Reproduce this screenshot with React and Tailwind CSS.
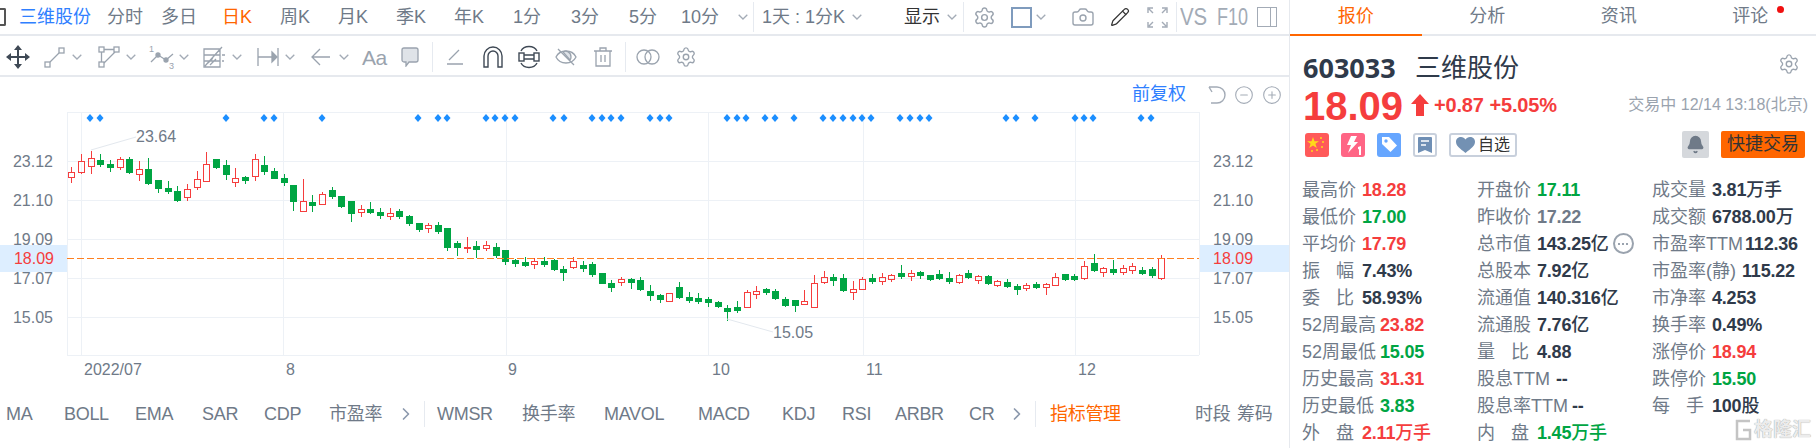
import { Settings, Camera, Pencil, Bell, CircleMinus, CirclePlus, ChevronRight } from 'lucide-react';

// [wickTop, bodyTop, bodyBottom, wickBottom, up] measured in 3x px from y=130
const CANDLES = [
  [111,127,142,158,1],[72,94,127,133,1],[63,85,109,131,1],[72,90,104,110,0],[90,102,113,125,0],[82,88,112,119,1],[82,87,128,131,0],[94,118,133,152,1],
  [84,117,161,164,0],[150,150,176,188,0],[153,174,185,191,0],[168,183,213,215,0],[162,178,202,212,1],[123,148,170,179,1],[66,103,152,155,1],[87,87,113,117,0],
  [91,105,134,150,0],[114,145,155,170,1],[138,141,152,161,0],[72,88,139,152,1],[78,105,125,134,0],[114,123,146,147,0],[132,144,158,167,0],[165,165,215,242,0],
  [147,214,244,244,1],[195,216,227,245,0],[187,193,223,223,1],[171,180,200,208,0],[198,198,231,234,0],[213,213,251,275,0],[226,238,247,260,1],[216,237,248,251,0],
  [234,246,257,266,0],[234,250,259,269,1],[238,243,260,266,0],[256,258,281,287,0],[279,279,299,305,0],[280,286,295,308,1],[276,285,305,311,0],[294,294,353,362,0],
  [334,339,353,377,0],[321,351,354,368,1],[334,348,359,384,0],[334,346,355,363,1],[340,351,377,383,0],[360,360,395,404,0],[387,390,401,410,0],[381,396,407,411,0],
  [385,394,403,416,1],[381,393,404,411,0],[387,390,419,422,0],[408,418,428,452,0],[381,394,412,416,1],[394,405,416,426,0],[397,403,434,440,0],[429,429,461,461,0],
  [451,460,473,486,0],[442,446,457,467,1],[445,448,458,476,0],[442,450,480,483,0],[466,484,497,513,0],[492,496,509,519,0],[488,490,514,515,1],[457,471,503,506,0],
  [487,502,513,520,0],[490,504,515,522,0],[502,507,518,530,0],[514,517,530,533,0],[525,534,545,572,0],[513,532,542,549,0],[481,487,532,535,1],[468,484,493,506,1],
  [474,477,488,494,0],[478,483,507,510,0],[502,507,527,530,0],[510,510,527,546,0],[480,514,523,523,1],[435,460,532,532,1],[423,442,457,461,1],[433,441,452,467,0],
  [433,444,483,485,0],[453,478,487,510,1],[442,448,478,478,1],[433,444,456,461,0],[430,442,452,464,1],[432,436,446,455,1],[405,430,441,446,0],[421,428,437,452,1],
  [423,426,438,446,0],[435,436,450,453,0],[420,433,446,449,0],[426,445,456,461,0],[433,434,455,461,1],[420,430,443,446,0],[435,439,449,461,1],[435,438,461,464,0],
  [451,454,464,472,1],[448,457,470,473,0],[463,468,479,495,0],[460,464,475,482,1],[457,463,473,476,0],[458,461,472,495,1],[430,442,464,467,1],[433,433,450,453,0],
  [433,439,450,452,0],[393,409,445,449,1],[372,400,422,425,0],[412,415,425,440,1],[390,418,429,435,0],[406,415,425,434,1],[400,409,419,431,1],[412,420,431,434,0],
  [411,418,438,443,0],[376,385,443,450,1],
];

const DIAMONDS = [90,100,226,264,274,322,418,438,447,486,495,505,515,553,564,592,602,611,621,650,660,669,727,737,746,765,775,794,823,833,843,853,862,871,900,910,920,929,1006,1016,1035,1075,1084,1093,1141,1151];
const H_LINES = [112,161,200,239,278,317,355];
const V_LINES = [67,81,283,506,708,863,1075,1199];
const Y_LABELS = [['23.12',161],['21.10',200],['19.09',239],['17.07',278],['15.05',317]];
const X_LABELS = [['2022/07',84],['8',286],['9',508],['10',712],['11',866],['12',1078]];

const RED = '#f53d3d';
const GREEN = '#00a543';

function Chevron({ className = '' }) {
  return (
    <svg width="10" height="6" viewBox="0 0 10 6" fill="none" stroke="#a3abb6" strokeWidth="1.3" className={`shrink-0 ${className}`}>
      <path d="M.7.7 5 5l4.3-4.3" />
    </svg>
  );
}

function Divider({ className = '' }) {
  return <div className={`w-px bg-[#e6eaf0] shrink-0 ${className}`} />;
}

function Candle({ d, i }) {
  const cx = Math.round(71.3 + i * 9.646) + 0.5;
  const [wt, bt, bb, wb, up] = d.map((v, k) => (k < 4 ? Math.round(130 + v / 3) : v));
  if (up) {
    return (
      <g stroke={RED} fill="none">
        <path d={`M${cx} ${wt}V${bt}M${cx} ${bb}V${wb}`} />
        <rect x={cx - 3} y={bt + 0.5} width="6" height={Math.max(bb - bt, 1)} />
      </g>
    );
  }
  return (
    <g>
      <path d={`M${cx} ${wt}V${wb}`} stroke={GREEN} />
      <rect x={cx - 3.5} y={bt} width="7" height={Math.max(bb - bt, 2)} fill={GREEN} />
    </g>
  );
}

function Chart() {
  return (
    <svg width="1289" height="268" viewBox="0 112 1289 268" className="block shrink-0 font-['Liberation_Sans',sans-serif]">
      <rect x="0" y="245" width="67" height="27" fill="#ddeeff" />
      <rect x="1199" y="245" width="90" height="27" fill="#ddeeff" />
      <g stroke="#edf1f6">
        {H_LINES.map(y => <path key={y} d={`M67 ${y + 0.5}H1199`} />)}
        {V_LINES.map(x => <path key={x} d={`M${x + 0.5} 112V355`} />)}
      </g>
      {DIAMONDS.map((x, i) => <path key={i} d={`M${x} 114l3.5 4-3.5 4-3.5-4z`} fill="#1c8fff" />)}
      {CANDLES.map((d, i) => <Candle key={i} d={d} i={i} />)}
      <path d="M67 258.5H1199" stroke="#ff8020" strokeDasharray="7 3" />
      <path d="M91 150L136 137M727 319L773 332" stroke="#e3e8ee" />
      <g fontSize="16" fill="#6f7a88">
        {Y_LABELS.map(([t, y]) => <text key={t} x="53" y={y + 6} textAnchor="end">{t}</text>)}
        {Y_LABELS.map(([t, y]) => <text key={t} x="1213" y={y + 6}>{t}</text>)}
        <text x="136" y="142">23.64</text>
        <text x="773" y="338">15.05</text>
        {X_LABELS.map(([t, x]) => <text key={t} x={x} y="375">{t}</text>)}
      </g>
      <g fontSize="16" fill={RED}>
        <text x="54" y="264" textAnchor="end">18.09</text>
        <text x="1213" y="264">18.09</text>
      </g>
    </svg>
  );
}

function TopBar() {
  const cells = ['日K', '周K', '月K', '季K', '年K', '1分', '3分', '5分'];
  return (
    <div className="flex items-center h-[36px] border-b-2 border-[#e6e9ee] text-[18px] text-[#6f7a88] whitespace-nowrap shrink-0">
      <div className="w-[6px] h-[18px] border-y-2 border-r-2 border-[#555] rounded-r-[2px] shrink-0" />
      <div className="ml-[13px] w-[72px] shrink-0 text-[#2f7fff]">三维股份</div>
      <div className="ml-[16px] w-[36px] shrink-0">分时</div>
      <div className="ml-[18px] w-[36px] shrink-0">多日</div>
      <div className="ml-[11px] flex shrink-0">
        {cells.map((t, i) => (
          <div key={t} className={`w-[58px] text-center ${i === 0 ? 'text-[#ff6600]' : ''}`}>{t}</div>
        ))}
      </div>
      <div className="ml-[9px] w-[40px] shrink-0">10分</div>
      <Chevron className="ml-[17px]" />
      <Divider className="ml-[5px] h-[30px]" />
      <div className="ml-[8px] w-[82px] shrink-0">1天 : 1分K</div>
      <Chevron className="ml-[8px]" />
      <div className="ml-[42px] w-[36px] shrink-0 text-[#333]">显示</div>
      <Chevron className="ml-[7px]" />
      <Divider className="ml-[6px] h-[30px]" />
      <Settings size={23} strokeWidth={1.5} color="#9aa3ae" className="ml-[9px] shrink-0" />
      <div className="ml-[15px] w-[21px] h-[21px] border-2 border-[#7f9bbd] shrink-0" />
      <Chevron className="ml-[4px]" />
      <Camera size={24} strokeWidth={1.4} color="#9aa3ae" className="ml-[25px] shrink-0" />
      <Pencil size={20} strokeWidth={1.5} color="#333" className="ml-[15px] shrink-0" />
      <svg width="21" height="21" viewBox="0 0 21 21" fill="none" stroke="#a3abb6" strokeWidth="1.4" className="ml-[17px] shrink-0">
        <path d="M1 6V1h5M15 1h5v5M1 15v5h5M20 15v5h-5M2 2l4 4M19 2l-4 4M2 19l4-4M19 19l-4-4" />
      </svg>
      <Divider className="ml-[8px] h-[30px]" />
      <div className="ml-[3px] w-[27px] shrink-0 text-[24px] text-[#a3abb6] scale-x-[0.85] origin-left">VS</div>
      <div className="ml-[10px] w-[31px] shrink-0 text-[24px] text-[#a3abb6] scale-x-[0.75] origin-left">F10</div>
      <div className="ml-[9px] w-[20px] h-[20px] border-[1.5px] border-[#a3abb6] shrink-0 flex justify-end pr-[5px]">
        <div className="w-[1.5px] h-full bg-[#a3abb6]" />
      </div>
    </div>
  );
}

function ToolBar() {
  const s = { fill: 'none', stroke: '#9aa3ae', strokeWidth: 1.3 };
  return (
    <div className="flex items-center h-[41px] pt-[3px] pl-[6px] border-b-2 border-[#e6e9ee] shrink-0">
      <svg width="24" height="24" viewBox="0 0 24 24" className="shrink-0" fill="#3f4955">
        <path d="M12 4v16M4 12h16" stroke="#3f4955" strokeWidth="2" />
        <path d="M12 0l4 5H8zM12 24l-4-5h8zM0 12l5-4v8zM24 12l-5 4V8z" />
      </svg>
      <svg width="21" height="21" viewBox="0 0 21 21" {...s} className="ml-[14px] shrink-0">
        <rect x="1" y="15" width="5" height="5" /><rect x="15" y="1" width="5" height="5" /><path d="M6 15l9-9" />
      </svg>
      <Chevron className="ml-[7px]" />
      <svg width="22" height="22" viewBox="0 0 22 22" {...s} className="ml-[16px] shrink-0">
        <rect x="1" y="1" width="5" height="5" /><rect x="16" y="1" width="5" height="5" /><rect x="1" y="16" width="5" height="5" />
        <path d="M6 3.5h10M3.500 6v10M17 6L6 17" />
      </svg>
      <Chevron className="ml-[6px]" />
      <svg width="26" height="26" viewBox="0 0 26 26" {...s} className="ml-[13px] shrink-0">
        <text x="0" y="8" fontSize="9" fill="#9aa3ae" stroke="none">1</text>
        <text x="20" y="25" fontSize="9" fill="#9aa3ae" stroke="none">3</text>
        <path d="M2 18l7-7 8 5 7-6" />
        <circle cx="9" cy="11" r="2" fill="#9aa3ae" /><circle cx="17" cy="16" r="2" fill="#9aa3ae" />
      </svg>
      <Chevron className="ml-[4px]" />
      <svg width="22" height="24" viewBox="0 0 22 24" {...s} className="ml-[14px] shrink-0">
        <path d="M1 4h16v18H1zM1 10h16M1 16h16M2 21L19 2M5 18l5-5M7 20l6-6M19 10h3M19 16h2" />
      </svg>
      <Chevron className="ml-[7px]" />
      <svg width="22" height="20" viewBox="0 0 22 20" {...s} className="ml-[15px] shrink-0">
        <path d="M1 1v18M1 10h15M21 1v18" />
        <path d="M15 5l5 5-5 5z" fill="#9aa3ae" />
      </svg>
      <Chevron className="ml-[6px]" />
      <svg width="20" height="20" viewBox="0 0 20 20" {...s} className="ml-[15px] shrink-0">
        <path d="M20 10H2M10 2l-8 8 8 8" />
      </svg>
      <Chevron className="ml-[9px]" />
      <div className="ml-[13px] w-[22px] shrink-0 text-[21px] leading-none text-[#9aa3ae] tracking-tight">Aa</div>
      <svg width="18" height="20" viewBox="0 0 18 20" className="ml-[17px] shrink-0" fill="#dfe3e8" stroke="#9aa3ae" strokeWidth="1.3">
        <path d="M3 1h12a2 2 0 0 1 2 2v10a2 2 0 0 1-2 2H8l-3 4v-4H3a2 2 0 0 1-2-2V3a2 2 0 0 1 2-2z" />
      </svg>
      <Divider className="ml-[13px] h-[30px]" />
      <svg width="16" height="16" viewBox="0 0 16 16" {...s} className="ml-[14px] shrink-0">
        <path d="M0 15h16M2 11L12 1" />
      </svg>
      <svg width="20" height="22" viewBox="0 0 20 22" fill="none" stroke="#3f4955" strokeWidth="1.4" className="ml-[20px] shrink-0">
        <path d="M1 21V10a9 9 0 0 1 18 0v11h-4V10a5 5 0 0 0-10 0v11z" />
      </svg>
      <svg width="22" height="24" viewBox="0 0 22 24" fill="none" stroke="#3f4955" strokeWidth="1.4" className="ml-[15px] shrink-0">
        <rect x="1" y="8" width="5" height="8" /><rect x="16" y="8" width="5" height="8" />
        <path d="M6 10h10M6 14h10M3 6C6 0 16 0 19 6M3 18c3 6 13 6 16 0" />
      </svg>
      <svg width="22" height="22" viewBox="0 0 22 22" {...s} className="ml-[15px] shrink-0">
        <path d="M1 11C5 3 17 3 21 11 17 19 5 19 1 11zM3 3l16 16" />
        <path d="M8 6c3-2 8 0 8 5 0 1 0 2-1 3z" fill="#dfe3e8" />
      </svg>
      <svg width="18" height="20" viewBox="0 0 18 20" {...s} className="ml-[17px] shrink-0">
        <path d="M0 4h18M6 4V1h6v3M2 4v15h14V4M7 8v7M11 8v7" />
      </svg>
      <Divider className="ml-[13px] h-[30px]" />
      <svg width="24" height="16" viewBox="0 0 24 16" {...s} className="ml-[10px] shrink-0">
        <circle cx="8" cy="8" r="7" /><circle cx="16" cy="8" r="7" />
      </svg>
      <Settings size={22} strokeWidth={1.5} color="#9aa3ae" className="ml-[15px] shrink-0" />
    </div>
  );
}

function BottomTabs() {
  return (
    <div className="flex items-center h-[66px] pt-[2px] text-[18px] text-[#6f7a88] whitespace-nowrap shrink-0 tracking-[-0.3px]">
      <div className="ml-[6px] w-[30px] shrink-0">MA</div>
      <div className="ml-[28px] w-[43px] shrink-0">BOLL</div>
      <div className="ml-[28px] w-[39px] shrink-0">EMA</div>
      <div className="ml-[28px] w-[35px] shrink-0">SAR</div>
      <div className="ml-[27px] w-[37px] shrink-0">CDP</div>
      <div className="ml-[28px] w-[54px] shrink-0">市盈率</div>
      <ChevronRight size={20} strokeWidth={2} color="#8c99ad" className="ml-[13px] shrink-0" />
      <Divider className="ml-[8px] h-[26px]" />
      <div className="ml-[12px] w-[58px] shrink-0">WMSR</div>
      <div className="ml-[27px] w-[54px] shrink-0">换手率</div>
      <div className="ml-[28px] w-[65px] shrink-0">MAVOL</div>
      <div className="ml-[29px] w-[56px] shrink-0">MACD</div>
      <div className="ml-[28px] w-[30px] shrink-0">KDJ</div>
      <div className="ml-[30px] w-[24px] shrink-0">RSI</div>
      <div className="ml-[29px] w-[47px] shrink-0">ARBR</div>
      <div className="ml-[27px] w-[24px] shrink-0">CR</div>
      <ChevronRight size={20} strokeWidth={2} color="#8c99ad" className="ml-[14px] shrink-0" />
      <Divider className="ml-[8px] h-[26px]" />
      <div className="ml-[14px] w-[72px] shrink-0 text-[#ff6600]">指标管理</div>
      <div className="ml-[73px] w-[36px] shrink-0">时段</div>
      <div className="ml-[6px] w-[36px] shrink-0">筹码</div>
    </div>
  );
}

const COLUMNS = [
  [
    { l: '最高价', v: '18.28', c: 'text-[#f53d3d]' },
    { l: '最低价', v: '17.00', c: 'text-[#00a543]' },
    { l: '平均价', v: '17.79', c: 'text-[#f53d3d]' },
    { l: ['振', '幅'], v: '7.43%' },
    { l: ['委', '比'], v: '58.93%' },
    { l: '52周最高', v: '23.82', c: 'text-[#f53d3d]', w: 'w-[78px]' },
    { l: '52周最低', v: '15.05', c: 'text-[#00a543]', w: 'w-[78px]' },
    { l: '历史最高', v: '31.31', c: 'text-[#f53d3d]', w: 'w-[78px]' },
    { l: '历史最低', v: '3.83', c: 'text-[#00a543]', w: 'w-[78px]' },
    { l: ['外', '盘'], v: '2.11', u: '万手', c: 'text-[#f53d3d]' },
  ],
  [
    { l: '开盘价', v: '17.11', c: 'text-[#00a543]' },
    { l: '昨收价', v: '17.22', c: 'text-[#6f7a88]' },
    { l: '总市值', v: '143.25', u: '亿', more: true },
    { l: '总股本', v: '7.92', u: '亿' },
    { l: '流通值', v: '140.316', u: '亿' },
    { l: '流通股', v: '7.76', u: '亿' },
    { l: ['量', '比'], v: '4.88' },
    { l: '股息TTM', v: '--', w: 'w-[79px]' },
    { l: '股息率TTM', v: '--', w: 'w-[95px]' },
    { l: ['内', '盘'], v: '1.45', u: '万手', c: 'text-[#00a543]' },
  ],
  [
    { l: '成交量', v: '3.81', u: '万手' },
    { l: '成交额', v: '6788.00', u: '万' },
    { l: '市盈率TTM', v: '112.36', w: 'w-[93px]' },
    { l: '市盈率(静)', v: '115.22', w: 'w-[90px]' },
    { l: '市净率', v: '4.253' },
    { l: '换手率', v: '0.49%' },
    { l: '涨停价', v: '18.94', c: 'text-[#f53d3d]' },
    { l: '跌停价', v: '15.50', c: 'text-[#00a543]' },
    { l: ['每', '手'], v: '100', u: '股' },
  ],
];

function Stat({ item }) {
  const { l, v, u, c = 'text-[#2f3a4a]', w = 'w-[60px]', more } = item;
  return (
    <div className="flex items-center h-[27px] whitespace-nowrap">
      {Array.isArray(l) ? (
        <div className="w-[60px] shrink-0 pr-[8px] flex justify-between text-[#6f7a88]"><span>{l[0]}</span><span>{l[1]}</span></div>
      ) : (
        <div className={`${w} shrink-0 text-[#6f7a88]`}>{l}</div>
      )}
      <div className={`font-bold tracking-[-0.2px] ${c}`}>
        {v}{u && <span className="font-medium">{u}</span>}
      </div>
      {more && (
        <div className="ml-[4px] w-[21px] h-[21px] rounded-full border-2 border-[#9aa3ae] shrink-0 flex items-center justify-center gap-[2px]">
          <span className="w-[2px] h-[2px] bg-[#9aa3ae]" /><span className="w-[2px] h-[2px] bg-[#9aa3ae]" /><span className="w-[2px] h-[2px] bg-[#9aa3ae]" />
        </div>
      )}
    </div>
  );
}

function QuotePanel() {
  const tabs = ['报价', '分析', '资讯', '评论'];
  return (
    <div className="w-[526px] shrink-0 flex flex-col">
      <div className="flex h-[36px] text-[18px] shrink-0">
        {tabs.map((t, i) => (
          <div key={t} className={`relative w-[132px] flex items-center justify-center pb-[2px] border-b-2 ${i === 0 ? 'border-[#ff6600] text-[#ff6600]' : 'border-[#e6e9ee] text-[#6f7a88]'}`}>
            {t}
            {i === 3 && <span className="absolute left-[92px] top-[6px] w-[7px] h-[7px] rounded-full bg-[#f01010]" />}
          </div>
        ))}
      </div>

      <div className="flex items-center h-[36px] mt-[14px] pl-[13px] pr-[16px] text-[#2f3a4a] shrink-0">
        <span className="text-[27px] font-bold font-['Open_Sans',sans-serif] w-[112px]">603033</span>
        <span className="text-[26px] leading-none">三维股份</span>
        <Settings size={22} strokeWidth={1.5} color="#9aa3ae" className="ml-auto -mt-[8px]" />
      </div>

      <div className="flex items-center h-[38px] pl-[13px] pr-[8px] shrink-0">
        <span className="text-[40px] font-bold text-[#f53d3d] leading-none w-[108px] pt-[2px]">18.09</span>
        <svg width="18" height="22" viewBox="0 0 18 22" fill="#f53d3d" className="shrink-0">
          <path d="M9 0l9 10h-5v12H5V10H0z" />
        </svg>
        <span className="ml-[5px] text-[20px] font-bold text-[#f53d3d] tracking-[-0.2px] leading-none">+0.87</span>
        <span className="ml-[6px] text-[20px] font-bold text-[#f53d3d] tracking-[-0.2px] leading-none">+5.05%</span>
        <span className="ml-auto text-[16px] text-[#9aa3ae] whitespace-nowrap">交易中 12/14 13:18(北京)</span>
      </div>

      <div className="flex items-center h-[27px] mt-[7px] pl-[15px] shrink-0">
        <svg width="24" height="24" viewBox="0 0 24 24" className="shrink-0">
          <rect width="24" height="24" rx="3" fill="#ff5a5a" />
          <path d="M8 4l1.500 4.200H14l-3.600 2.600 1.400 4.200L8 12.400 4.200 15l1.400-4.200L2 8.200h4.500z" fill="#ffd91a" />
          <circle cx="16" cy="5" r="1" fill="#ffd91a" /><circle cx="18" cy="9" r="1" fill="#ffd91a" /><circle cx="17" cy="14" r="1" fill="#ffd91a" /><circle cx="12" cy="17" r="1" fill="#ffd91a" /><circle cx="7" cy="18" r="1" fill="#ffd91a" />
        </svg>
        <svg width="24" height="24" viewBox="0 0 24 24" className="ml-[12px] shrink-0">
          <rect width="24" height="24" rx="3" fill="#ff6585" />
          <path d="M10 3h6l-3 6h4L7 20l3-8H6z" fill="#fff" />
          <path d="M17 14l3-1v9h-2v-6l-1 .4z" fill="#fff" />
        </svg>
        <svg width="24" height="24" viewBox="0 0 24 24" className="ml-[12px] shrink-0">
          <rect width="24" height="24" rx="3" fill="#66a6ff" />
          <path d="M5 4h7l8 8.500-6.500 6.500L5 11z" fill="#fff" />
          <circle cx="9" cy="8" r="1.700" fill="#66a6ff" />
        </svg>
        <div className="ml-[12px] w-[24px] h-[24px] rounded-[3px] border-2 border-[#c8d0dc] flex items-center justify-center shrink-0">
          <svg width="14" height="16" viewBox="0 0 14 16">
            <path d="M1 0h12a1 1 0 0 1 1 1v15l-7-3-7 3V1a1 1 0 0 1 1-1z" fill="#6f8fb5" />
            <path d="M3 4h8M3 8h5" stroke="#fff" strokeWidth="1.600" />
          </svg>
        </div>
        <div className="ml-[12px] w-[68px] h-[24px] rounded-[3px] border-2 border-[#c8d0dc] flex items-center justify-center gap-[3px] text-[16px] text-[#333] shrink-0">
          <svg width="19" height="16" viewBox="0 0 19 16" fill="#7391b3" className="shrink-0">
            <path d="M9.500 16C4 11.500 0 9 0 4.800 0 2 2.200 0 5 0c1.900 0 3.500 1 4.500 2.500C10.500 1 12.100 0 14 0c2.800 0 5 2 5 4.800C19 9 15 11.500 9.500 16z" />
          </svg>
          自选
        </div>
        <div className="ml-[165px] w-[27px] h-[27px] bg-[#d5d8dc] rounded-[2px] flex items-center justify-center shrink-0">
          <Bell size={19} fill="#6f7a88" color="#6f7a88" />
        </div>
        <div className="ml-[12px] w-[84px] h-[27px] bg-[#ff6600] rounded-[2px] flex items-center justify-center text-[18px] text-[#333] whitespace-nowrap shrink-0">快捷交易</div>
      </div>

      <div className="grid grid-cols-[175px_175px_175px] mt-[18px] pl-[12px] text-[18px] leading-none">
        {COLUMNS.map((col, i) => (
          <div key={i} className="flex flex-col">
            {col.map(item => <Stat key={item.v + item.l} item={item} />)}
          </div>
        ))}
      </div>
    </div>
  );
}

export default function App() {
  return (
    <div className="relative flex w-[1816px] h-[448px] overflow-hidden bg-white font-['Liberation_Sans','Noto_Sans_CJK_SC',sans-serif]">
      <div className="w-[1290px] shrink-0 flex flex-col border-r border-[#e6e9ee]">
        <TopBar />
        <ToolBar />
        <div className="flex items-center justify-end h-[35px] pr-[7px] shrink-0">
          <span className="text-[18px] text-[#2f7fff] whitespace-nowrap">前复权</span>
          <svg width="18" height="18" viewBox="0 0 18 18" fill="none" stroke="#a3abb6" strokeWidth="1.4" className="ml-[22px] shrink-0">
            <path d="M1 1h8a8 8 0 0 1 0 16H3M1 1l3 5" />
          </svg>
          <CircleMinus size={20} strokeWidth={1.3} color="#a3abb6" className="ml-[8px] shrink-0" />
          <CirclePlus size={20} strokeWidth={1.3} color="#a3abb6" className="ml-[8px] shrink-0" />
        </div>
        <Chart />
        <BottomTabs />
      </div>
      <QuotePanel />

      {/* watermark */}
      <div className="absolute right-[5px] bottom-[4px] flex items-center gap-[2px] text-[19px] font-bold text-[#ececec] [text-shadow:0_0_1px_#888] whitespace-nowrap">
        <svg width="17" height="22" viewBox="0 0 17 22" fill="none" stroke="#c4c4c4" strokeWidth="2.500">
          <path d="M15 2H2v18h13v-9H8" />
        </svg>
        格隆汇
      </div>
    </div>
  );
}
